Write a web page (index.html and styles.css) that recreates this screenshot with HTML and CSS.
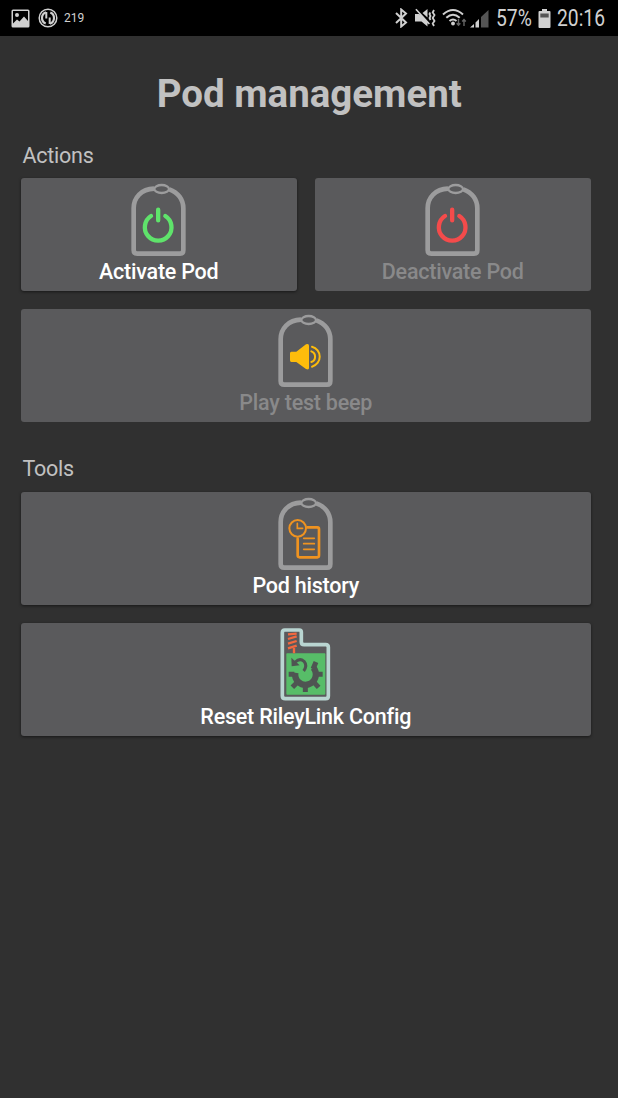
FILE: index.html
```html
<!DOCTYPE html>
<html lang="en">
<head>
<meta charset="utf-8">
<title>Pod management</title>
<link rel="stylesheet" href="styles.css">
</head>
<body>
<svg class="defs" width="0" height="0" aria-hidden="true">
  <symbol id="pod" viewBox="36 15 168 225">
    <path d="M108 35C70 36 47 62 47 94V219Q47 230 58 230H186Q196 230 196 219V94C196 68 180 46 154 37" fill="none" stroke="#9c9c9d" stroke-width="14"/>
    <ellipse cx="131" cy="36" rx="22" ry="12" fill="#5a5a5c" stroke="#9c9c9d" stroke-width="7"/>
  </symbol>
  <symbol id="power" viewBox="36 15 168 225">
    <path d="M99 121A40 40 0 1 0 142 121M120.500 102V134" fill="none" stroke="currentColor" stroke-width="13" stroke-linecap="round"/>
  </symbol>
</svg>

<header class="status">
  <div class="status-left">
    <svg width="19" height="19" viewBox="0 0 19 19"><path fill="#d0d0d0" fill-rule="evenodd" d="M2 .5H17Q18.500 .5 18.500 2V17Q18.500 18.500 17 18.500H2Q.5 18.500 .5 17V2Q.5 .5 2 .5ZM2 2V14.500L6 10.500L8.500 12.500L13 7.500L17 12V2ZM4 6A2 2 0 1 1 8 6A2 2 0 1 1 4 6"/></svg>
    <svg width="20" height="20" viewBox="0 0 20 20" fill="none" stroke="#d0d0d0"><circle cx="10" cy="10" r="8.800" stroke-width="1.500"/><path stroke-width="2.200" d="M8 4.300A6 6 0 0 0 7.700 15.500M12 15.700A6 6 0 0 0 12.300 4.500"/><path stroke-width="2" d="M8.300 4V10.500M11.700 16V9.500"/></svg>
    <span class="count">219</span>
  </div>
  <div class="status-right">
    <svg width="14" height="20" viewBox="0 0 14 20"><path d="M2 5L12 14.500L7.200 18.500V1.500L12 5.500L2 15" fill="none" stroke="#d0d0d0" stroke-width="2"/></svg>
    <svg class="mute" width="22" height="20" viewBox="0 0 22 20"><path fill="#d0d0d0" d="M1 6H5L13.500 14V18.500L7.500 13.500H1ZM8.500 5L13.500 1V9.500ZM1.300 1.700L2.500 .7L16 15.500L14.800 16.500Z"/><path fill="none" stroke="#d0d0d0" stroke-width="1.800" d="M16.300 4.500L15.500 6L16.500 8L15.500 10L16.500 12M20 2L18.700 4.500L20.500 7L18.700 10L20.500 13L18.700 15.500L20 18"/></svg>
    <svg class="wifi" width="26" height="20" viewBox="0 0 26 20"><g fill="none" stroke="#d0d0d0" stroke-width="2"><path d="M1 6.500Q11 -2.500 21 6.500M4.300 9.800Q11 3.700 17.700 9.800M7.500 13Q11 10 14.500 13"/></g><circle cx="11" cy="15.500" r="1.900" fill="#d0d0d0"/><path d="M16.500 11V17M14.700 15.300L16.500 17.300L18.300 15.300M22 18V11.500M20.200 13.500L22 11.500L23.800 13.500" fill="none" stroke="#666" stroke-width="1.400"/></svg>
    <svg class="signal" width="19" height="19" viewBox="0 0 19 19"><path fill="#d0d0d0" d="M0 18.500L4 15V18.500ZM5.500 13.500L9 10V18.500H5.500Z"/><path fill="#555" d="M11 8L18.500 1V18.500H11Z"/></svg>
    <span class="percent">57%</span>
    <svg class="battery" width="13" height="19" viewBox="0 0 13 19"><path fill="#d0d0d0" d="M4 0H9V2H11.500Q12.500 2 12.500 3V18Q12.500 19 11.500 19H1.500Q.5 19 .5 18V3Q.5 2 1.500 2H4Z"/><path fill="#555" d="M2.300 4.500H10.700V8.500H2.300Z"/></svg>
    <span class="clock">20:16</span>
  </div>
</header>

<main class="content">
  <h1 class="title">Pod management</h1>

  <h2 class="section">Actions</h2>
  <div class="grid">
    <button class="card">
      <svg class="icon" viewBox="36 15 168 225"><use href="#pod" x="36" y="15" width="168" height="225"/><use class="green" href="#power" x="36" y="11" width="168" height="225"/></svg>
      <span class="label">Activate Pod</span>
    </button>
    <button class="card off">
      <svg class="icon" viewBox="36 15 168 225"><use href="#pod" x="36" y="15" width="168" height="225"/><use class="red" href="#power" x="36" y="11" width="168" height="225"/></svg>
      <span class="label">Deactivate Pod</span>
    </button>
    <button class="card wide off">
      <svg class="icon" viewBox="36 15 168 225"><use href="#pod" x="36" y="15" width="168" height="225"/>
        <path fill="#fdbc0b" d="M79 131H94L123 109Q132 105 132 113V180Q132 187 123 183L94 162H79Q75 162 75 157V136Q75 131 79 131Z"/>
        <path fill="none" stroke="#fdbc0b" stroke-width="6" stroke-linecap="round" d="M139 130A17 17 0 0 1 139 162M141 116A31 31 0 0 1 141 176"/></svg>
      <span class="label">Play test beep</span>
    </button>
  </div>

  <h2 class="section tools">Tools</h2>
  <div class="grid">
    <button class="card wide">
      <svg class="icon" viewBox="36 15 168 225"><use href="#pod" x="36" y="15" width="168" height="225"/>
        <g fill="none" stroke="#ef9320" stroke-linecap="round"><path stroke-width="8" d="M127 109H157Q162 109 162 115V193Q162 199 157 199H104Q98 199 98 193V143"/><circle cx="98" cy="112" r="25" stroke-width="6"/><path stroke-width="5" d="M97 97V112H113M116 142H148M116 158H148M116 175H148"/></g></svg>
      <span class="label">Pod history</span>
    </button>
    <button class="card wide">
      <svg class="icon" viewBox="36 15 168 225">
        <path fill="#5a5a5c" stroke="#b9d5d1" stroke-width="11" d="M59 24H103Q109 24 109 30V60Q109 68 117 68H182Q190 68 190 76V222Q190 230 182 230H61Q52 230 52 222V32Q52 24 59 24Z"/>
        <path fill="#57bd68" d="M66 94H179Q181 94 181 97V215Q181 218 178 218H67Q64 218 64 215V96Q64 94 66 94Z"/>
        <path fill="none" stroke="#f2683f" stroke-width="7" d="M69 37L95 35M69 51L95 43M69 65L95 57M69 79L95 71M87 78V94"/>
        <path fill="none" stroke="#4f5452" stroke-width="19" d="M91 152A31 31 0 1 0 145 137"/>
        <path fill="none" stroke="#4f5452" stroke-width="15" d="M71 157H88M154 157H173M121 187V210M82 196L97 181M161 196L147 181M153 120L144 141"/>
        <path fill="none" stroke="#4f5452" stroke-width="9" d="M91 120Q104 107 117 118Q128 131 116 147"/>
        <path fill="#4f5452" d="M79 107L80 133L104 130Z"/>
      </svg>
      <span class="label">Reset RileyLink Config</span>
    </button>
  </div>
</main>
</body>
</html>
```
FILE: styles.css
```css
* { box-sizing: border-box; }
body {
  margin: 0;
  min-height: 1098px;
  background: #303030;
  color: #c1c1c1;
  font-family: Roboto, "Liberation Sans", sans-serif;
}
.defs { display: block; height: 0; }
.status {
  height: 36px;
  padding: 0 13px 0 11px;
  background: #000;
  color: #d0d0d0;
  display: flex;
  justify-content: space-between;
  align-items: center;
}
.status-left, .status-right { display: flex; align-items: center; }
.status-left { gap: 8px; }
.count { font-size: 12px; margin-left: -2px; }
.mute { margin-left: 6px; }
.wifi { margin-left: 6px; }
.signal { margin-left: 2px; }
.percent, .clock {
  font-size: 23.500px;
  line-height: 37px;
  transform: scaleX(.82);
  transform-origin: left;
  white-space: nowrap;
}
.percent { width: 35px; margin-left: 7px; }
.battery { margin-left: 7px; }
.clock { width: 48px; margin-left: 6px; }
.content { padding: 32px 27.500px 0 21px; }
.title {
  margin: 0;
  text-align: center;
  font-size: 38.500px;
  line-height: 52px;
  font-weight: 700;
  padding-left: 7px;
}
.section {
  margin: 0;
  padding: 23px 0 0 1.500px;
  height: 58px;
  font-size: 21.500px;
  letter-spacing: -.25px;
  line-height: 25px;
  font-weight: 400;
}
.section.tools { height: 70.500px; padding-top: 34.500px; }
.grid {
  display: grid;
  grid-template-columns: 1fr 1fr;
  gap: 18.500px;
}
.card {
  height: 112.500px;
  padding: 4px 0 0;
  border: 0;
  border-radius: 3px;
  background: #5a5a5c;
  color: #fff;
  font-family: inherit;
  display: flex;
  flex-direction: column;
  align-items: center;
  box-shadow: 0 1px 3px rgba(0, 0, 0, .5);
}
.wide { grid-column: 1 / -1; }
.off { color: #89898a; box-shadow: none; }
.icon { width: 56px; height: 75px; margin-right: 2px; }
.green { color: #5fe36b; }
.red { color: #f44b4b; }
.label { font-size: 21.500px; letter-spacing: -.22px; line-height: 29px; font-weight: 500; }
```
